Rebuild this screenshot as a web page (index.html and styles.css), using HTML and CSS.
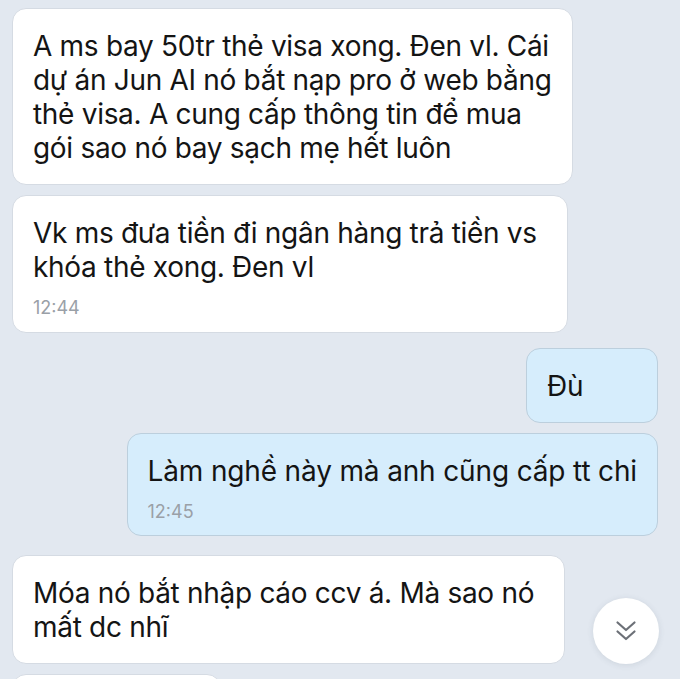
FILE: index.html
```html
<!DOCTYPE html>
<html lang="vi">
<head>
<meta charset="utf-8">
<title>Chat</title>
<link rel="stylesheet" href="styles.css">
</head>
<body>
<div class="chat">
  <div class="msg in first">
    <div class="bubble">A ms bay 50tr thẻ visa xong. Đen vl. Cái<br>dự án Jun AI nó bắt nạp pro ở web bằng<br>thẻ visa. A cung cấp thông tin để mua<br>gói sao nó bay sạch mẹ hết luôn</div>
  </div>
  <div class="msg in">
    <div class="bubble timed loose">Vk ms đưa tiền đi ngân hàng trả tiền vs<br>khóa thẻ xong. Đen vl<div class="time">12:44</div></div>
  </div>
  <div class="msg out group">
    <div class="bubble short">Đù</div>
  </div>
  <div class="msg out">
    <div class="bubble timed wide">Làm nghề này mà anh cũng cấp tt chi<div class="time">12:45</div></div>
  </div>
  <div class="msg in group2">
    <div class="bubble loose">Móa nó bắt nhập cáo ccv á. Mà sao nó<br>mất dc nhĩ</div>
  </div>
  <div class="msg in">
    <div class="bubble next"></div>
  </div>
  <button class="scroll-down" aria-label="Cuộn xuống">
    <svg width="24" height="24" viewBox="0 0 24 24" fill="none" stroke="#6c7077" stroke-width="2.2" stroke-linecap="round" stroke-linejoin="round">
      <polyline points="3.5,3.5 12,11 20.5,3.5"/>
      <polyline points="3.5,12.5 12,20 20.5,12.5"/>
    </svg>
  </button>
</div>
</body>
</html>
```

FILE: styles.css
```css
* { box-sizing: border-box; }
html, body {
  margin: 0;
  padding: 0;
  height: 679px;
  overflow: hidden;
  background: #e2e8f0;
}
.chat {
  position: relative;
  height: 679px;
  overflow: hidden;
  display: flex;
  flex-direction: column;
  padding: 8px 22px 0 12px;
  font-family: Inter, "Noto Sans", sans-serif;
  color: #141414;
}
.msg {
  display: flex;
  margin-top: 10px;
  flex-shrink: 0;
}
.msg.first { margin-top: 0; }
.msg.group { margin-top: 15px; }
.msg.group2 { margin-top: 19px; }
.msg.in { justify-content: flex-start; }
.msg.out { justify-content: flex-end; }
.bubble {
  background: #ffffff;
  border: 1px solid #d5dbe3;
  border-radius: 14px;
  padding: 20px 20px 19px 20px;
  font-size: 28px;
  line-height: 34px;
  letter-spacing: -0.3px;
  white-space: nowrap;
}
.msg.out .bubble {
  background: #d6edfc;
  border-color: #bccfdd;
}
.bubble.timed { padding-bottom: 13px; }
.msg.out .bubble.timed { padding-bottom: 12px; }
.bubble.loose { padding-right: 30px; }
.bubble.wide { letter-spacing: -0.15px; }
.bubble.short { min-width: 132px; }
.time {
  margin-top: 13px;
  font-size: 18px;
  line-height: 22px;
  letter-spacing: 0;
  color: #9aa0a7;
}
.bubble.next { width: 209px; height: 60px; }
.scroll-down {
  position: absolute;
  right: 21px;
  bottom: 15px;
  width: 66px;
  height: 66px;
  border-radius: 50%;
  border: none;
  background: #ffffff;
  box-shadow: 0 1px 6px rgba(60, 70, 90, 0.12);
  display: flex;
  align-items: center;
  justify-content: center;
  padding: 0;
}
.scroll-down svg { display: block; }
```
